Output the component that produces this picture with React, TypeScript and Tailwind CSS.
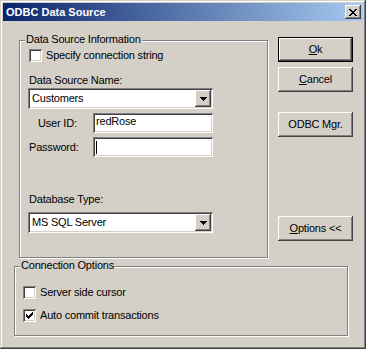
import React from "react";

const raised =
  "bg-[#D4D0C8] shadow-[inset_-1px_-1px_0_#404040,inset_1px_1px_0_#fff,inset_-2px_-2px_0_#808080,inset_2px_2px_0_#D4D0C8]";
const sunken =
  "bg-white shadow-[inset_1px_1px_0_#808080,inset_-1px_-1px_0_#fff,inset_2px_2px_0_#404040,inset_-2px_-2px_0_#D4D0C8]";
const etched = "relative border border-[#808080] shadow-[inset_1px_1px_0_#fff,1px_1px_0_#fff]";

const CLOSE_X = ["XX....XX", ".XX..XX.", "..XXXX..", "...XX...", "..XXXX..", ".XX..XX.", "XX....XX"];
const ARROW = ["XXXXXXX", ".XXXXX.", "..XXX..", "...X..."];
const CHECK = ["......X", ".....XX", "X...XXX", "XX.XXX.", "XXXXX..", ".XXX...", "..X...."];

function Pixels({ rows }: { rows: string[] }) {
  return (
    <svg width={rows[0].length} height={rows.length} shapeRendering="crispEdges">
      {rows.map((row, y) =>
        row.split("").map((c, x) => (c === "X" ? <rect key={`${x}-${y}`} x={x} y={y} width={1} height={1} fill="#000" /> : null))
      )}
    </svg>
  );
}

function Checkbox({ label, checked }: { label: string; checked?: boolean }) {
  return (
    <div className="flex items-center gap-[4px]">
      <div className={`w-[13px] h-[13px] flex items-center justify-center ${sunken}`}>
        {checked && <Pixels rows={CHECK} />}
      </div>
      <span>{label}</span>
    </div>
  );
}

function Combo({ value }: { value: string }) {
  return (
    <div className={`w-[185px] h-[21px] flex items-center pl-[4px] pr-[2px] ${sunken}`}>
      <span className="flex-1">{value}</span>
      <div className={`w-[16px] h-[17px] flex items-center justify-center ${raised}`}>
        <Pixels rows={ARROW} />
      </div>
    </div>
  );
}

function Legend({ children }: { children: React.ReactNode }) {
  return <div className="absolute left-[5px] -top-[8px] px-[1px] bg-[#D4D0C8]">{children}</div>;
}

function Button({ children, isDefault }: { children: React.ReactNode; isDefault?: boolean }) {
  const frame = isDefault
    ? "bg-[#D4D0C8] border border-black shadow-[inset_-1px_-1px_0_#404040,inset_1px_1px_0_#fff,inset_-2px_-2px_0_#808080]"
    : raised;
  return <div className={`w-[75px] h-[25px] flex items-center justify-center ${frame}`}>{children}</div>;
}

export default function App() {
  return (
    <div className="w-[366px] h-[349px] bg-[#D4D0C8] p-[3px] shadow-[inset_-1px_-1px_0_#404040,inset_1px_1px_0_#D4D0C8,inset_-2px_-2px_0_#808080,inset_2px_2px_0_#fff] font-['Liberation_Sans',Arial,sans-serif] text-[11px] leading-[13px] text-black tracking-[-0.2px]">
      {/* title bar */}
      <div className="h-[18px] flex items-center bg-[linear-gradient(to_right,#0A246A,#A6CAF0)]">
        <span className="pl-[3px] text-white font-bold tracking-normal">ODBC Data Source</span>
        <div className={`ml-auto mr-[2px] w-[16px] h-[14px] flex items-center justify-center ${raised}`}>
          <Pixels rows={CLOSE_X} />
        </div>
      </div>

      <div className="flex items-start">
        <div className={`ml-[16px] mt-[19px] w-[249px] h-[218px] ${etched}`}>
          <Legend>Data Source Information</Legend>
          <div className="mt-[8px] ml-[9px]">
            <Checkbox label="Specify connection string" />
          </div>
          <div className="mt-[12px] ml-[9px]">Data Source Name:</div>
          <div className="mt-[1px] ml-[8px]">
            <Combo value="Customers" />
          </div>
          <div className="mt-[4px] ml-[8px] flex items-center">
            <span className="w-[65px] pl-[10px]">User ID:</span>
            <div className={`w-[120px] h-[20px] pl-[3px] pt-[2px] ${sunken}`}>redRose</div>
          </div>
          <div className="mt-[4px] ml-[8px] flex items-center">
            <span className="w-[65px] pl-[1px]">Password:</span>
            <div className={`w-[120px] h-[20px] pl-[3px] pt-[4px] ${sunken}`}>
              <div className="w-[1px] h-[13px] bg-black" />
            </div>
          </div>
          <div className="mt-[36px] ml-[9px]">Database Type:</div>
          <div className="mt-[6px] ml-[8px]">
            <Combo value="MS SQL Server" />
          </div>
        </div>

        <div className="ml-[10px] mt-[16px] flex flex-col">
          <Button isDefault>
            <span><u>O</u>k</span>
          </Button>
          <div className="mt-[5px]">
            <Button>
              <span><u>C</u>ancel</span>
            </Button>
          </div>
          <div className="mt-[20px]">
            <Button>ODBC Mgr.</Button>
          </div>
          <div className="mt-[79px]">
            <Button>
              <span><u>O</u>ptions &lt;&lt;</span>
            </Button>
          </div>
        </div>
      </div>

      <div className={`ml-[11px] mt-[8px] w-[334px] h-[70px] ${etched}`}>
        <Legend>Connection Options</Legend>
        <div className="mt-[19px] ml-[8px]">
          <Checkbox label="Server side cursor" />
        </div>
        <div className="mt-[10px] ml-[8px]">
          <Checkbox label="Auto commit transactions" checked />
        </div>
      </div>
    </div>
  );
}
